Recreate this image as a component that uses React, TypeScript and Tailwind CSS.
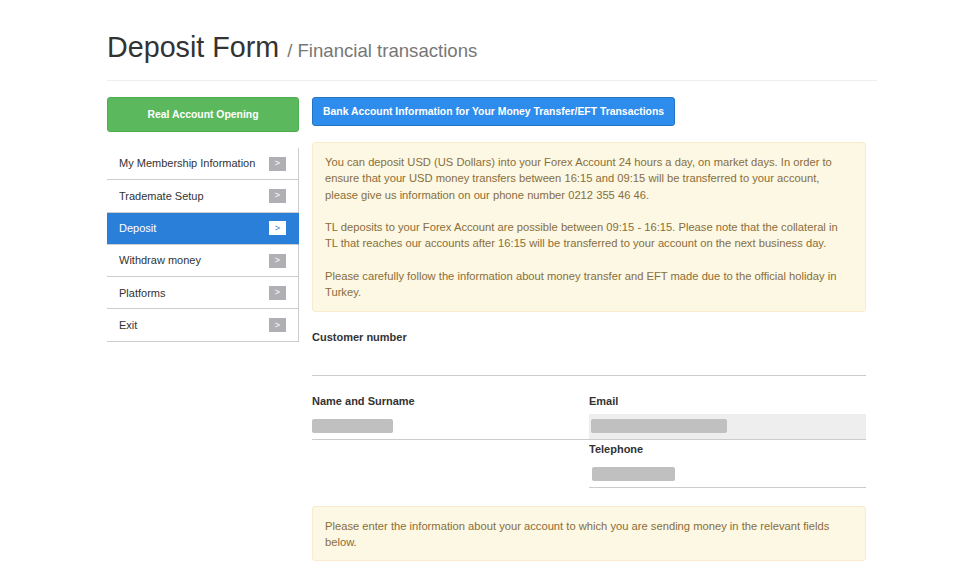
const menu = [
  { label: "My Membership Information", active: false },
  { label: "Trademate Setup", active: false },
  { label: "Deposit", active: true },
  { label: "Withdraw money", active: false },
  { label: "Platforms", active: false },
  { label: "Exit", active: false },
];

const Field = ({ label, barWidth, disabled, className }: { label: string; barWidth?: number; disabled?: boolean; className?: string }) => (
  <div className={className}>
    <label className="block text-[11px] font-bold leading-[15px] text-[#333] mb-[5px]">{label}</label>
    <div className={`h-[26px] border-b border-[#ccc] flex items-center ${disabled ? "bg-[#eee] pl-[2px]" : ""}`}>
      {barWidth ? <span className="block h-[14px] rounded-[2px] bg-[#c0c0c0]" style={{ width: barWidth }} /> : null}
    </div>
  </div>
);

export default function App() {
  return (
    <div className="min-h-screen bg-white text-[#333]" style={{ fontFamily: '"Liberation Sans", Arial, sans-serif' }}>
      <div className="ml-[107px] w-[770px] pt-[29px]">
        <h1 className="text-[28.7px] leading-[36px] text-[#333] font-normal">
          Deposit Form <span className="text-[18.6px] text-[#777]">/ Financial transactions</span>
        </h1>
        <div className="mt-[11px] border-b border-[#eee]" />

        <div className="mt-[16px] flex gap-[13px]">
          {/* left column */}
          <div className="w-[192px] shrink-0">
            <button className="w-full h-[35px] rounded-[3px] bg-[#5cb85c] border border-[#4cae4c] text-white text-[10.4px] font-bold">
              Real Account Opening
            </button>
            <ul className="mt-[16px]">
              {menu.map((item) => (
                <li
                  key={item.label}
                  className={`h-[32.3px] flex items-center justify-between pl-[12px] pr-[12px] border-b border-b-[#ccc] border-r text-[11px] ${
                    item.active ? "bg-[#2a7fd8] border-r-[#2a7fd8] text-white" : "border-r-[#ccc] text-[#333]"
                  }`}
                >
                  <span>{item.label}</span>
                  <span
                    className={`w-[17px] h-[14px] flex items-center justify-center text-[9px] leading-none ${
                      item.active ? "bg-white text-[#2a7fd8]" : "bg-[#b0b0b4] text-white"
                    }`}
                  >
                    &gt;
                  </span>
                </li>
              ))}
            </ul>
          </div>

          {/* right column */}
          <div className="w-[554px]">
            <button className="h-[29px] px-[10px] rounded-[3px] bg-[#2d8cec] border border-[#2574c4] text-white text-[10.4px] font-bold">
              Bank Account Information for Your Money Transfer/EFT Transactions
            </button>

            <div className="mt-[16px] rounded-[3px] border border-[#faebcc] bg-[#fcf8e3] text-[#8a6d3b] text-[11.2px] leading-[16.3px] px-[12px] pt-[11px] pb-[10px]">
              <p>
                You can deposit USD (US Dollars) into your Forex Account 24 hours a day, on market days. In order to ensure that
                your USD money transfers between 16:15 and 09:15 will be transferred to your account, please give us information on
                our phone number 0212 355 46 46.
              </p>
              <p className="mt-[16.3px]">
                TL deposits to your Forex Account are possible between 09:15 - 16:15. Please note that the collateral in TL that
                reaches our accounts after 16:15 will be transferred to your account on the next business day.
              </p>
              <p className="mt-[16.3px]">
                Please carefully follow the information about money transfer and EFT made due to the official holiday in Turkey.
              </p>
            </div>

            <Field label="Customer number" className="mt-[18px]" />

            <div className="mt-[18px] grid grid-cols-2">
              <Field label="Name and Surname" barWidth={81} />
              <div>
                <Field label="Email" barWidth={136} disabled />
                <Field label="Telephone" barWidth={83} className="mt-[2px] [&>div]:pl-[3px]" />
              </div>
            </div>

            <div className="mt-[18px] rounded-[3px] border border-[#faebcc] bg-[#fcf8e3] text-[#8a6d3b] text-[11.2px] leading-[16.3px] px-[12px] pt-[11px] pb-[10px]">
              <p>Please enter the information about your account to which you are sending money in the relevant fields below.</p>
            </div>
          </div>
        </div>
      </div>
    </div>
  );
}
